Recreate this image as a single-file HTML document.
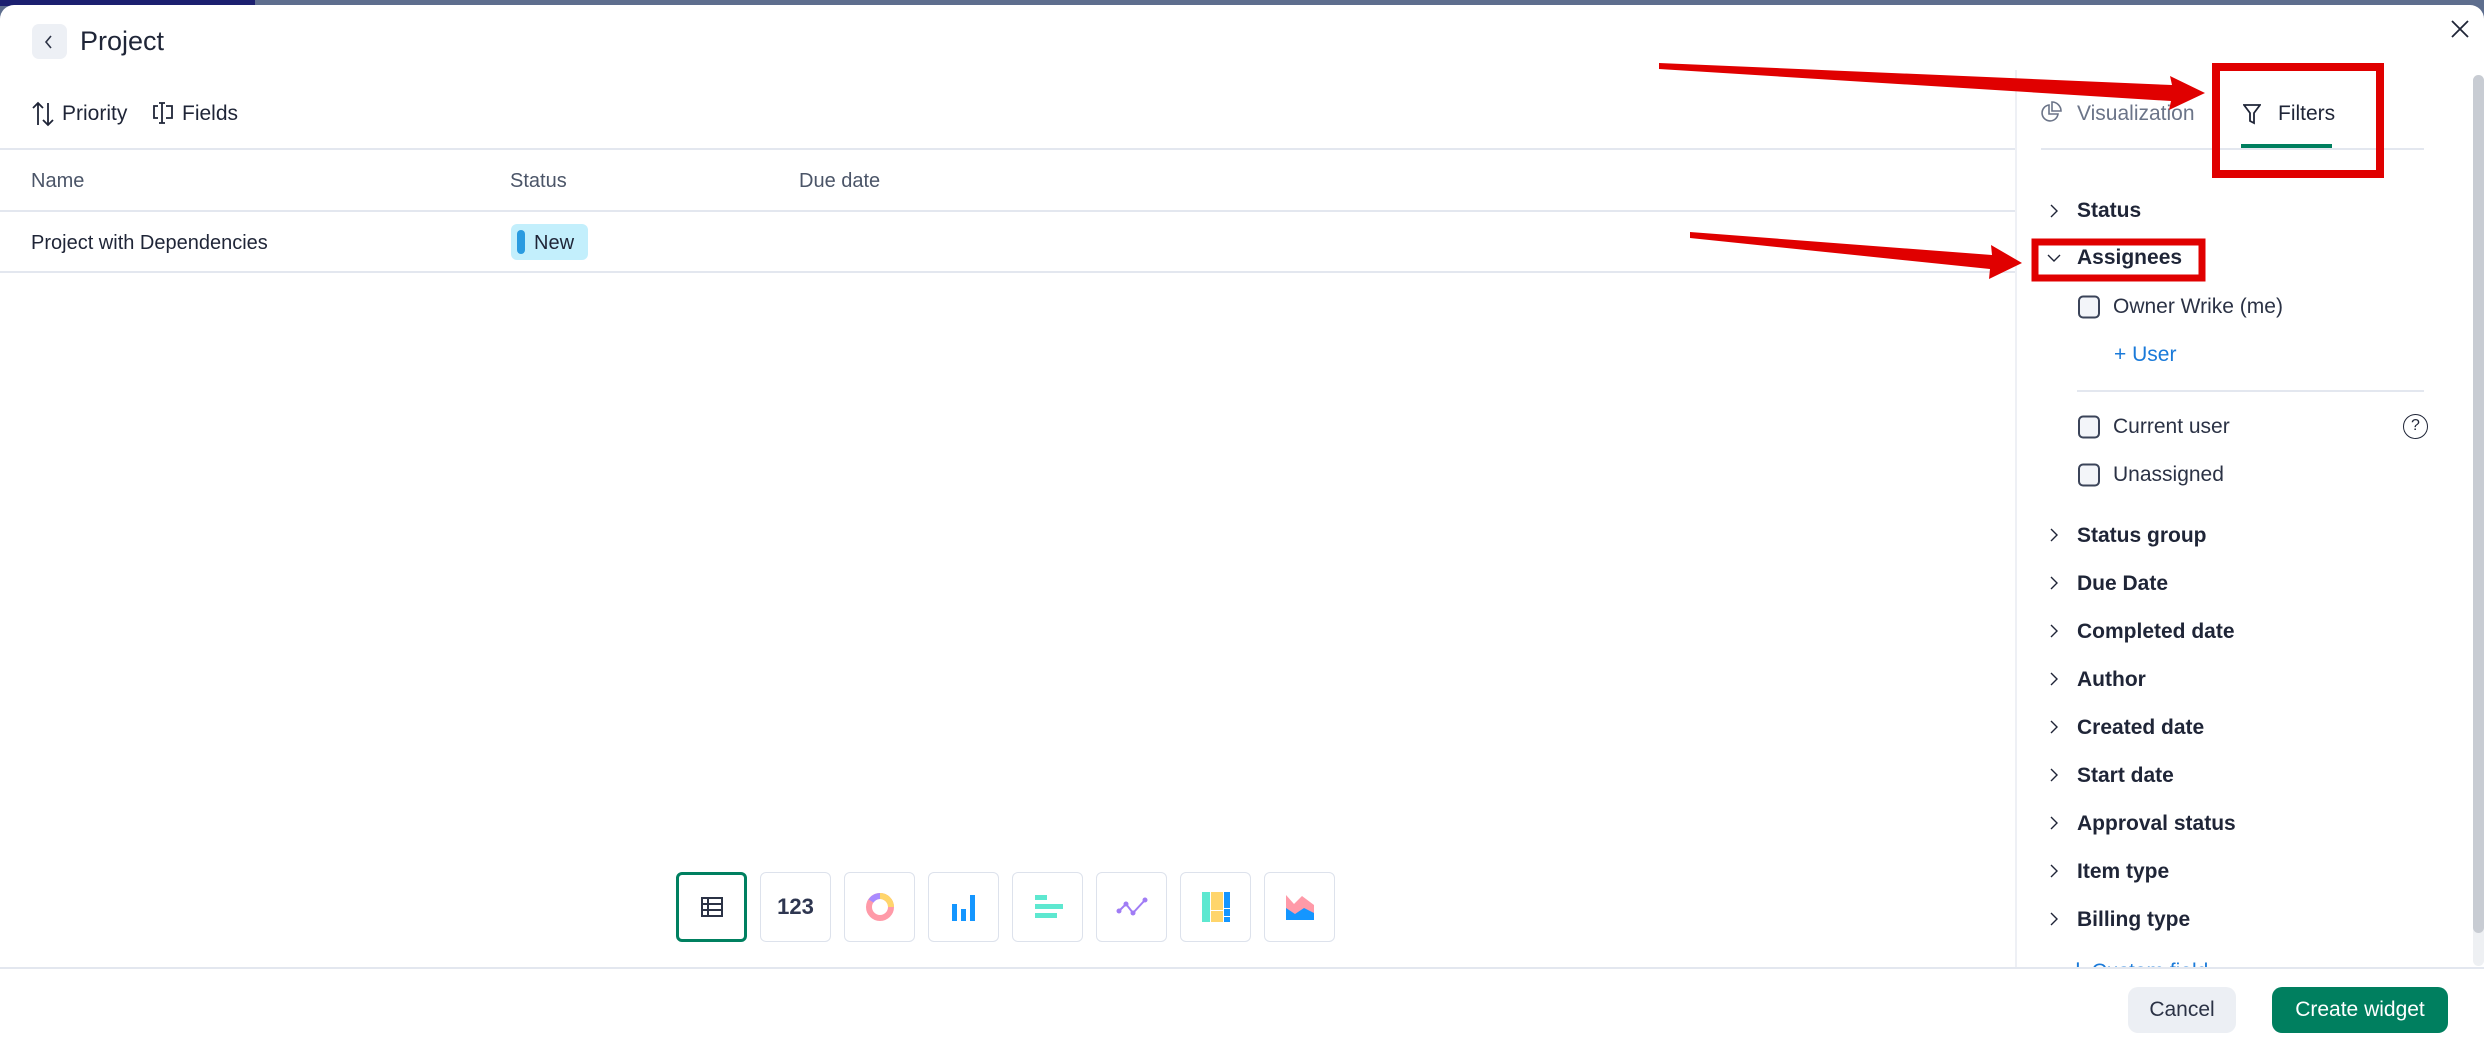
<!DOCTYPE html>
<html><head><meta charset="utf-8"><style>
*{box-sizing:border-box;margin:0;padding:0}
body{width:2484px;height:1045px;overflow:hidden;background:#5e6e8e;font-family:"Liberation Sans",sans-serif;position:relative;color:#1f2537}
.strip{position:absolute;left:0;top:0;width:255px;height:6px;background:#1c2070}
.modal{position:absolute;left:0;top:5px;width:2484px;height:1040px;background:#fff;border-radius:14px 14px 0 0}
.a{position:absolute;white-space:nowrap}
.hl{position:absolute;height:2px;background:#e3e7ef}
.fl{position:absolute;left:2077px;font-size:21px;font-weight:bold;color:#1f2537;transform:translateY(-50%)}
.ch{position:absolute;left:2047px;width:14px;height:14px;transform:translateY(-50%)}
.cb{position:absolute;left:2078px;width:22px;height:23px;border:2px solid #3b4459;border-radius:5px;background:#f3f5f9;transform:translateY(-50%)}
.t{position:absolute;font-size:21px;color:#2b3245;transform:translateY(-50%)}
.btn{position:absolute;top:872px;width:71px;height:70px;border:1.5px solid #dde2ec;border-radius:6px;display:flex;align-items:center;justify-content:center}
</style></head><body>
<div class="strip"></div>
<div class="modal"></div>

<div class="a" style="left:32px;top:24px;width:35px;height:35px;background:#edf0f5;border-radius:7px"></div>
<svg class="a" style="left:43px;top:34px" width="12" height="16" viewBox="0 0 12 16"><path d="M8 2 L3 8 L8 14" fill="none" stroke="#2b3245" stroke-width="1.6"/></svg>
<div class="a" style="left:80px;top:26px;font-size:27px;color:#1f2537">Project</div>

<svg class="a" style="left:32px;top:101px" width="22" height="26" viewBox="0 0 22 26"><path d="M6 24V2M1 7l5-5 5 5M16 2v22M11 19l5 5 5-5" fill="none" stroke="#1f2537" stroke-width="1.8"/></svg>
<div class="a" style="left:62px;top:102px;font-size:21px">Priority</div>
<svg class="a" style="left:152px;top:101px" width="24" height="24" viewBox="0 0 24 24"><path d="M6 5H2v12h4M14 5h6v12h-6M10 2v20M7 2h6M7 22h6" fill="none" stroke="#1f2537" stroke-width="1.8"/></svg>
<div class="a" style="left:182px;top:102px;font-size:21px">Fields</div>

<div class="hl" style="left:0;width:2015px;top:148px"></div>
<div class="a" style="left:31px;top:170px;font-size:20px;color:#4b5568">Name</div>
<div class="a" style="left:510px;top:170px;font-size:20px;color:#4b5568">Status</div>
<div class="a" style="left:799px;top:170px;font-size:20px;color:#4b5568">Due date</div>
<div class="hl" style="left:0;width:2015px;top:210px"></div>
<div class="a" style="left:31px;top:232px;font-size:20px">Project with Dependencies</div>
<div class="a" style="left:511px;top:224px;width:77px;height:36px;background:#c3effc;border-radius:6px"></div>
<div class="a" style="left:517px;top:230px;width:8px;height:24px;background:#2a9be0;border-radius:4px"></div>
<div class="a" style="left:534px;top:232px;font-size:20px;color:#1f2537">New</div>
<div class="hl" style="left:0;width:2015px;top:271px"></div>

<div class="btn" style="left:676px;border:3px solid #008060"><svg width="24" height="22" viewBox="0 0 24 22"><rect x="2" y="2" width="20" height="18" fill="none" stroke="#2b3245" stroke-width="2"/><path d="M2 8h20M2 14h20M8 2v18" stroke="#2b3245" stroke-width="2"/></svg></div>
<div class="btn" style="left:760px;font-weight:bold;font-size:22px;color:#2e3650">123</div>
<div class="btn" style="left:844px"><svg width="30" height="30" viewBox="0 0 30 30"><circle cx="15" cy="15" r="11" fill="none" stroke="#ff9aa8" stroke-width="6"/><path d="M15 4 A11 11 0 0 1 26 15" fill="none" stroke="#ffd56b" stroke-width="6"/><path d="M6 9 A11 11 0 0 1 15 4" fill="none" stroke="#a98bff" stroke-width="6"/></svg></div>
<div class="btn" style="left:928px"><svg width="30" height="30" viewBox="0 0 30 30"><rect x="3" y="12" width="5" height="17" fill="#1496ff"/><rect x="12" y="17" width="5" height="12" fill="#1496ff"/><rect x="21" y="3" width="5" height="26" fill="#1496ff"/></svg></div>
<div class="btn" style="left:1012px"><svg width="30" height="30" viewBox="0 0 30 30"><rect x="2" y="3" width="12" height="5" fill="#5ee8d0"/><rect x="2" y="12" width="28" height="5" fill="#5ee8d0"/><rect x="2" y="21" width="22" height="5" fill="#5ee8d0"/></svg></div>
<div class="btn" style="left:1096px"><svg width="32" height="24" viewBox="0 0 32 24"><path d="M3 16l7-7 7 9 12-13" fill="none" stroke="#a07cf5" stroke-width="2"/><circle cx="3" cy="16" r="2.5" fill="#a07cf5"/><circle cx="10" cy="9" r="2.5" fill="#a07cf5"/><circle cx="17" cy="18" r="2.5" fill="#a07cf5"/><circle cx="29" cy="5" r="2.5" fill="#a07cf5"/></svg></div>
<div class="btn" style="left:1180px"><svg width="30" height="32" viewBox="0 0 30 32"><rect x="1" y="1" width="8" height="30" fill="#5ee8d0"/><rect x="10" y="1" width="12" height="18" fill="#ffd56b"/><rect x="10" y="20" width="12" height="11" fill="#ffd56b"/><rect x="23" y="1" width="6" height="16" fill="#1496ff"/><rect x="23" y="18" width="6" height="7" fill="#1496ff"/><rect x="23" y="26" width="6" height="5" fill="#1496ff"/></svg></div>
<div class="btn" style="left:1264px"><svg width="30" height="28" viewBox="0 0 30 28"><path d="M1 2l8 9 8-8 12 9v10H1z" fill="#ff9aa8"/><path d="M1 15l9 6 9-6 10 5v7H1z" fill="#1496ff"/></svg></div>

<div class="a" style="left:2015px;top:70px;width:2px;height:898px;background:#eef0f5"></div>
<svg class="a" style="left:2039px;top:101px" width="24" height="24" viewBox="0 0 24 24"><path d="M10 4a8 8 0 1 0 9 9h-9z" fill="none" stroke="#6b7488" stroke-width="1.6"/><path d="M13 1v9h9a9 9 0 0 0-9-9z" fill="none" stroke="#6b7488" stroke-width="1.6"/></svg>
<div class="a" style="left:2077px;top:102px;font-size:21px;color:#6b7488">Visualization</div>
<svg class="a" style="left:2243px;top:103px" width="18" height="22" viewBox="0 0 18 22"><path d="M1 2h16l-6 8v10l-4-2v-8z" fill="none" stroke="#1f2537" stroke-width="1.8"/></svg>
<div class="a" style="left:2278px;top:102px;font-size:21px">Filters</div>
<div class="hl" style="left:2041px;width:383px;top:148px"></div>
<div class="a" style="left:2241px;top:144px;width:91px;height:4px;background:#007f5f"></div>

<svg class="a" style="left:2450px;top:19px" width="20" height="20" viewBox="0 0 20 20"><path d="M2 2l16 16M18 2L2 18" stroke="#1f2537" stroke-width="1.8"/></svg>
<div class="a" style="left:2473px;top:75px;width:11px;height:891px;background:#eef0f3;border-radius:6px"></div>
<div class="a" style="left:2473px;top:75px;width:11px;height:858px;background:#c8ccd3;border-radius:6px"></div>

<svg class="ch" style="top:211px" viewBox="0 0 14 14"><path d="M4 1l6 6-6 6" fill="none" stroke="#1f2537" stroke-width="1.4"/></svg>
<div class="fl" style="top:211px">Status</div>
<svg class="ch" style="top:258px" viewBox="0 0 14 14"><path d="M1 4l6 6 6-6" fill="none" stroke="#1f2537" stroke-width="1.4"/></svg>
<div class="fl" style="top:258px">Assignees</div>
<div class="cb" style="top:307px"></div><div class="t" style="left:2113px;top:307px">Owner Wrike (me)</div>
<div class="t" style="left:2114px;top:355px;color:#1a7ad9">+ User</div>
<div class="hl" style="left:2077px;width:347px;top:390px"></div>
<div class="cb" style="top:427px"></div><div class="t" style="left:2113px;top:427px">Current user</div>
<div class="a" style="left:2403px;top:414px;width:25px;height:25px;border:1.8px solid #1f2537;border-radius:50%;font-size:16px;text-align:center;line-height:22px">?</div>
<div class="cb" style="top:475px"></div><div class="t" style="left:2113px;top:475px">Unassigned</div>

<svg class="ch" style="top:535px" viewBox="0 0 14 14"><path d="M4 1l6 6-6 6" fill="none" stroke="#1f2537" stroke-width="1.4"/></svg><div class="fl" style="top:536px">Status group</div>
<svg class="ch" style="top:583px" viewBox="0 0 14 14"><path d="M4 1l6 6-6 6" fill="none" stroke="#1f2537" stroke-width="1.4"/></svg><div class="fl" style="top:584px">Due Date</div>
<svg class="ch" style="top:631px" viewBox="0 0 14 14"><path d="M4 1l6 6-6 6" fill="none" stroke="#1f2537" stroke-width="1.4"/></svg><div class="fl" style="top:632px">Completed date</div>
<svg class="ch" style="top:679px" viewBox="0 0 14 14"><path d="M4 1l6 6-6 6" fill="none" stroke="#1f2537" stroke-width="1.4"/></svg><div class="fl" style="top:680px">Author</div>
<svg class="ch" style="top:727px" viewBox="0 0 14 14"><path d="M4 1l6 6-6 6" fill="none" stroke="#1f2537" stroke-width="1.4"/></svg><div class="fl" style="top:728px">Created date</div>
<svg class="ch" style="top:775px" viewBox="0 0 14 14"><path d="M4 1l6 6-6 6" fill="none" stroke="#1f2537" stroke-width="1.4"/></svg><div class="fl" style="top:776px">Start date</div>
<svg class="ch" style="top:823px" viewBox="0 0 14 14"><path d="M4 1l6 6-6 6" fill="none" stroke="#1f2537" stroke-width="1.4"/></svg><div class="fl" style="top:824px">Approval status</div>
<svg class="ch" style="top:871px" viewBox="0 0 14 14"><path d="M4 1l6 6-6 6" fill="none" stroke="#1f2537" stroke-width="1.4"/></svg><div class="fl" style="top:872px">Item type</div>
<svg class="ch" style="top:919px" viewBox="0 0 14 14"><path d="M4 1l6 6-6 6" fill="none" stroke="#1f2537" stroke-width="1.4"/></svg><div class="fl" style="top:920px">Billing type</div>
<div class="a" style="left:2070px;top:954px;height:13px;overflow:hidden;font-size:21px;color:#1a7ad9"><span style="font-size:27px">+</span> Custom field</div>

<div class="hl" style="left:0;width:2484px;top:967px"></div>
<div class="a" style="left:2128px;top:987px;width:108px;height:46px;background:#eceff4;border-radius:10px;font-size:21px;color:#2b3245;text-align:center;line-height:46px">Cancel</div>
<div class="a" style="left:2272px;top:987px;width:176px;height:46px;background:#007f5f;border-radius:10px;font-size:21px;color:#fff;text-align:center;line-height:46px">Create widget</div>

<svg class="a" style="left:0;top:0" width="2484" height="1045" viewBox="0 0 2484 1045">
<path d="M1659 63 L2172 85 L2170 76 L2205 93 L2169 110 L2171 101 L1659 69 Z" fill="#e00000"/>
<path d="M1690 232 L1992 255 L1991 245 L2022 263 L1989 279 L1990 269 L1690 238 Z" fill="#e00000"/>
<rect x="2216" y="67" width="164" height="107" fill="none" stroke="#e00000" stroke-width="8"/>
<rect x="2035" y="242" width="167" height="36" fill="none" stroke="#e00000" stroke-width="7"/>
</svg>
</body></html>
